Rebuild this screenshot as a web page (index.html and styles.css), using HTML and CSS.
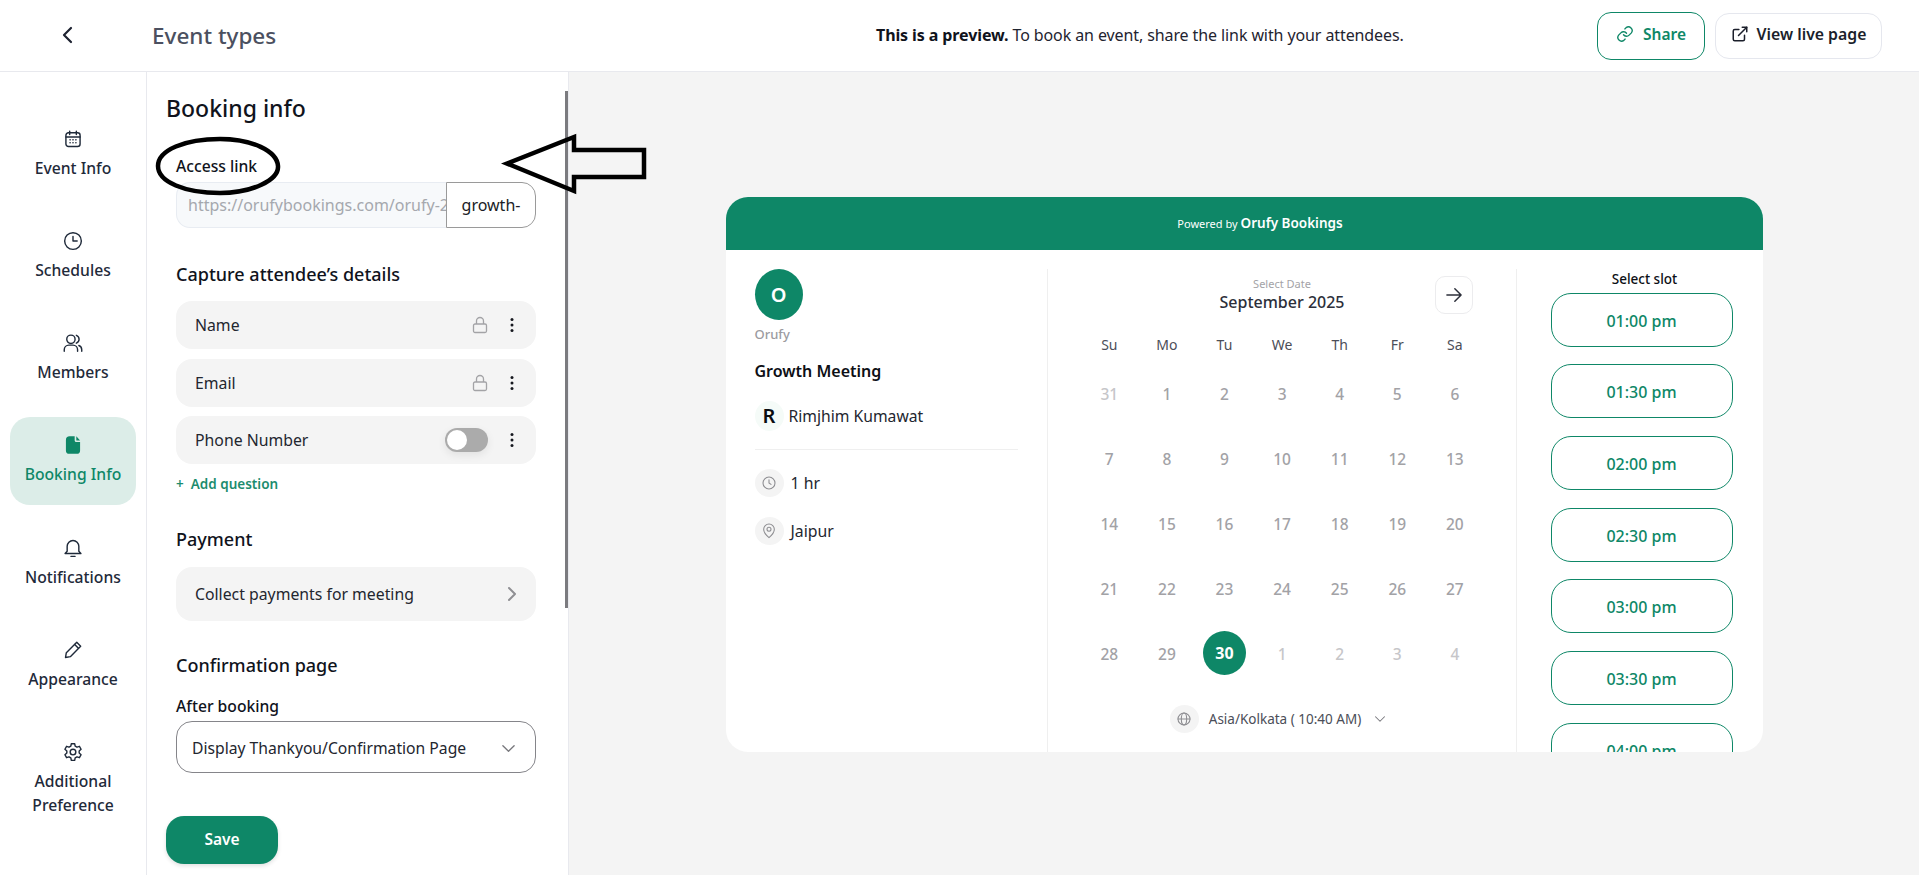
FILE: index.html
```html
<!DOCTYPE html>
<html lang="en">
<head>
<meta charset="utf-8">
<title>Event types</title>
<link rel="stylesheet" href="styles.css">
</head>
<body>
<div class="page">
  <header class="topbar">
    <div class="back"><svg class="ic-back" viewBox="0 0 24 24"><path d="M15 5l-7 7 7 7"/></svg></div>
    <div class="crumb">Event types</div>
    <div class="notice"><b>This is a preview.</b> To book an event, share the link with your attendees.</div>
    <div class="actions">
      <button class="btn btn-share"><svg class="ic" viewBox="0 0 24 24"><path d="M10 13a5 5 0 0 0 7.500.5l3-3a5 5 0 0 0-7-7l-1.700 1.700"/><path d="M14 11a5 5 0 0 0-7.500-.5l-3 3a5 5 0 0 0 7 7l1.700-1.700"/></svg>Share</button>
      <button class="btn btn-live"><svg class="ic" viewBox="0 0 24 24"><path d="M18 13.500V19a2 2 0 0 1-2 2H5a2 2 0 0 1-2-2V8a2 2 0 0 1 2-2h5.500"/><path d="M15 3h6v6"/><path d="M10 14L21 3"/></svg>View live page</button>
    </div>
  </header>
  <div class="main">
    <nav class="sidebar">
      <a class="nav-item"><svg class="nav-ic" viewBox="0 0 24 24"><rect x="3.500" y="4.500" width="17" height="16.500" rx="3"/><path d="M3.500 9.500h17M8 2.500v4M16 2.500v4"/><path class="dots" d="M8.500 13h.01M12 13h.01M15.500 13h.01M8.500 16.500h.01M12 16.500h.01M15.500 16.500h.01"/></svg><span>Event Info</span></a>
      <a class="nav-item"><svg class="nav-ic" viewBox="0 0 24 24"><circle cx="12" cy="12" r="10"/><path d="M12 6.500V12h5"/></svg><span>Schedules</span></a>
      <a class="nav-item"><svg class="nav-ic" viewBox="0 0 24 24"><circle cx="9.500" cy="7.500" r="5"/><path d="M1.500 22v-2A5.500 5.500 0 0 1 7 14.500h5a5.500 5.500 0 0 1 5.500 5.500v2"/><path d="M16 2.800a5 5 0 0 1 0 9.400M19 15a5.500 5.500 0 0 1 3.500 5v2"/></svg><span>Members</span></a>
      <a class="nav-item active"><svg class="nav-ic filled" viewBox="0 0 24 24"><path d="M8 1.500h6v5a2 2 0 0 0 2 2h4.500v10a4 4 0 0 1-4 4h-9a4 4 0 0 1-4-4V6a4.500 4.500 0 0 1 4.500-4.500z"/><path d="M16 1.500L20.500 6.500H16z"/></svg><span>Booking Info</span></a>
      <a class="nav-item"><svg class="nav-ic" viewBox="0 0 24 24"><path d="M5 16V10a7 7 0 0 1 14 0v6l2.500 2.500h-19z"/><path d="M9.500 22h5"/></svg><span>Notifications</span></a>
      <a class="nav-item"><svg class="nav-ic" viewBox="0 0 24 24"><path d="M16.500 2.800l4.700 4.700L8.800 20 3 21l1-5.800z"/><path d="M14 5.500l4.500 4.500"/></svg><span>Appearance</span></a>
      <a class="nav-item"><svg class="nav-ic" viewBox="0 0 24 24"><circle cx="12" cy="12" r="3.400"/><path d="M10 2h4l.6 3 2.200 1.200 2.900-1 2 3.500-2.300 2v2.600l2.300 2-2 3.500-2.900-1-2.200 1.200-.6 3h-4l-.6-3-2.200-1.200-2.900 1-2-3.500 2.300-2v-2.600l-2.300-2 2-3.500 2.900 1L9.400 5z"/></svg><span>Additional Preference</span></a>
    </nav>

    <section class="panel">
      <h1 class="panel-title">Booking info</h1>
      <div class="form">
        <label class="label label-access">Access link</label>
        <div class="link-field">
          <div class="link-prefix">https://orufybookings.com/orufy-2</div>
          <div class="link-slug">growth-</div>
        </div>

        <h2 class="section-title s-capture">Capture attendee’s details</h2>
        <div class="rows">
          <div class="row"><span class="row-text">Name</span><svg class="ic-lock" viewBox="0 0 16 18"><rect x="1.500" y="8" width="13" height="8.500" rx="1.500"/><path d="M4.500 8V5a3.500 3.500 0 0 1 7 0v3"/></svg><svg class="ic-more" viewBox="0 0 16 16"><circle cx="8" cy="2.500" r="1.500"/><circle cx="8" cy="8" r="1.500"/><circle cx="8" cy="13.500" r="1.500"/></svg></div>
          <div class="row"><span class="row-text">Email</span><svg class="ic-lock" viewBox="0 0 16 18"><rect x="1.500" y="8" width="13" height="8.500" rx="1.500"/><path d="M4.500 8V5a3.500 3.500 0 0 1 7 0v3"/></svg><svg class="ic-more" viewBox="0 0 16 16"><circle cx="8" cy="2.500" r="1.500"/><circle cx="8" cy="8" r="1.500"/><circle cx="8" cy="13.500" r="1.500"/></svg></div>
          <div class="row"><span class="row-text">Phone Number</span><span class="toggle"><span class="knob"></span></span><svg class="ic-more" viewBox="0 0 16 16"><circle cx="8" cy="2.500" r="1.500"/><circle cx="8" cy="8" r="1.500"/><circle cx="8" cy="13.500" r="1.500"/></svg></div>
        </div>
        <div class="add-q">+ &nbsp;Add question</div>

        <h2 class="section-title s-payment">Payment</h2>
        <div class="row row-tall"><span class="row-text">Collect payments for meeting</span><svg class="ic-chev" viewBox="0 0 16 16"><path d="M5 2l6 6-6 6"/></svg></div>

        <h2 class="section-title s-confirm">Confirmation page</h2>
        <label class="label label-after">After booking</label>
        <div class="select"><span>Display Thankyou/Confirmation Page</span><svg class="ic-down" viewBox="0 0 16 16"><path d="M2 5l6 6 6-6"/></svg></div>
      </div>
      <button class="save">Save</button>
      <div class="scroll-thumb"></div>
    </section>

    <section class="preview">
      <div class="card">
        <div class="card-head">Powered by <b>Orufy Bookings</b></div>
        <div class="card-body">
          <div class="col-info">
            <div class="avatar">O</div>
            <div class="org">Orufy</div>
            <div class="meeting">Growth Meeting</div>
            <div class="host"><span class="host-badge">R</span><span>Rimjhim Kumawat</span></div>
            <div class="meta meta-time"><span class="meta-ic"><svg viewBox="0 0 24 24"><circle cx="12" cy="12" r="9"/><path d="M12 7v5l3 2"/></svg></span><span>1 hr</span></div>
            <div class="meta"><span class="meta-ic"><svg viewBox="0 0 24 24"><path d="M12 22s8-6.500 8-12.500a8 8 0 0 0-16 0C4 15.500 12 22 12 22z"/><circle cx="12" cy="9.500" r="3"/></svg></span><span>Jaipur</span></div>
          </div>
          <div class="col-cal">
            <div class="cal-head">
              <div class="cal-title"><div class="cal-sub">Select Date</div><div class="cal-month">September 2025</div></div>
              <button class="cal-next"><svg viewBox="0 0 24 24"><path d="M3.500 12h17M13 4.500l7.500 7.500-7.500 7.500"/></svg></button>
            </div>
            <div class="weekdays"><span>Su</span><span>Mo</span><span>Tu</span><span>We</span><span>Th</span><span>Fr</span><span>Sa</span></div>
            <div class="dates">
              <span class="faint">31</span><span>1</span><span>2</span><span>3</span><span>4</span><span>5</span><span>6</span>
              <span>7</span><span>8</span><span>9</span><span>10</span><span>11</span><span>12</span><span>13</span>
              <span>14</span><span>15</span><span>16</span><span>17</span><span>18</span><span>19</span><span>20</span>
              <span>21</span><span>22</span><span>23</span><span>24</span><span>25</span><span>26</span><span>27</span>
              <span>28</span><span>29</span><span class="today"><i>30</i></span><span class="faint">1</span><span class="faint">2</span><span class="faint">3</span><span class="faint">4</span>
            </div>
            <div class="tz">
              <span class="meta-ic"><svg viewBox="0 0 24 24"><circle cx="12" cy="12" r="9"/><ellipse cx="12" cy="12" rx="4" ry="9"/><path d="M3 12h18"/></svg></span>
              <span class="tz-text">Asia/Kolkata ( 10:40 AM)</span>
              <svg class="ic-down tz-down" viewBox="0 0 16 16"><path d="M2 5l6 6 6-6"/></svg>
            </div>
          </div>
          <div class="col-slots">
            <div class="slot-title">Select slot</div>
            <div class="slots">
              <div class="slot">01:00 pm</div>
              <div class="slot">01:30 pm</div>
              <div class="slot">02:00 pm</div>
              <div class="slot">02:30 pm</div>
              <div class="slot">03:00 pm</div>
              <div class="slot">03:30 pm</div>
              <div class="slot">04:00 pm</div>
            </div>
          </div>
        </div>
      </div>
    </section>
  </div>
  <svg class="annot" viewBox="0 0 1919 875">
    <path d="M220 139c32 0 57 12 58 27 1 14-26 27-58 27-35 0-62-11-62-27 0-16 27-27 62-27z"/>
    <path d="M644 150H574V137L507 163.500 574 191V177H644z"/>
  </svg>
</div>
</body>
</html>
```
FILE: styles.css
```css
* { box-sizing: border-box; }
html, body { margin: 0; height: 100%; }
body { font-family: "Noto Sans", "Open Sans", sans-serif; color: #1f2430; background: #fff; overflow: hidden; }
.page { position: relative; width: 100%; height: 875px; display: flex; flex-direction: column; overflow: hidden; }

/* top bar */
.topbar { height: 72px; flex: none; display: flex; align-items: center; border-bottom: 1px solid #e8e9ee; background: #fff; }
.back { width: 152px; flex: none; display: flex; padding-left: 56px; }
.ic-back { width: 24px; height: 24px; fill: none; stroke: #1d2230; stroke-width: 2.200; stroke-linecap: round; stroke-linejoin: round; margin-top: -2px; }
.crumb { width: 724px; flex: none; font-size: 22.500px; font-weight: 500; color: #4b5060; margin-top: -1px; }
.notice { flex: 1; font-size: 16px; color: #1f2430; white-space: nowrap; margin-top: -2px; letter-spacing: -.1px; }
.notice b { font-weight: 700; color: #10131c; }
.actions { display: flex; align-items: center; gap: 10px; margin-right: 37px; }
.btn { display: flex; align-items: center; justify-content: center; gap: 9px; font: 600 15.500px "Noto Sans", sans-serif; background: #fff; border-radius: 14px; padding: 0 0 3px; }
.btn-share { width: 108px; height: 48px; border: 1px solid #0e8767; color: #0e8767; }
.btn-live { width: 167px; height: 46px; border: 1px solid #e5e7ee; color: #1b1f2b; font-size: 15.800px; gap: 8px; }
.ic { width: 18px; height: 18px; fill: none; stroke: currentColor; stroke-width: 2; stroke-linecap: round; stroke-linejoin: round; }
.btn-share .ic { stroke-width: 1.800; }

.main { flex: 1; min-height: 0; display: flex; }

/* sidebar */
.sidebar { width: 147px; flex: none; border-right: 1px solid #e8e9ee; padding: 39px 10px 0; display: flex; flex-direction: column; gap: 14.150px; }
.nav-item { height: 88px; border-radius: 20px; display: flex; flex-direction: column; align-items: center; padding-top: 18px; gap: 7px; color: #1f2a3a; font-size: 15.700px; font-weight: 500; line-height: 24px; text-align: center; }
.nav-item span { display: block; padding: 0 6px; }
.nav-ic { width: 20px; height: 20px; flex: none; fill: none; stroke: #1f2a3a; stroke-width: 1.700; stroke-linecap: round; stroke-linejoin: round; }
.nav-ic .dots { stroke-width: 2; }
.nav-item.active { background: #dcede8; color: #0e8767; }
.nav-ic.filled { fill: #0e8767; stroke: none; }

/* panel */
.panel { position: relative; width: 422px; flex: none; border-right: 1px solid #e8e9ee; padding: 21px 0 0 19px; }
.panel-title { margin: 0; font-size: 23px; line-height: 30px; font-weight: 500; color: #10131c; }
.form { margin-left: 10px; width: 360px; }
.label { display: block; font-size: 15.700px; line-height: 20px; font-weight: 500; color: #10131c; }
.label-access { margin-top: 33px; }
.label-after { margin-top: 19px; }
.link-field { margin-top: 6px; height: 46px; display: flex; }
.link-prefix { width: 270px; flex: none; padding-left: 11px; font-size: 16px; line-height: 44px; color: #a5a8ae; white-space: nowrap; overflow: hidden; background: #f7f9fb; border: 1px solid #e8ecf2; border-right: 0; border-radius: 14px 0 0 14px; }
.link-slug { flex: 1; background: #fff; border: 1px solid #9a9a9a; border-radius: 0 14px 14px 0; font-size: 16px; line-height: 44px; text-align: center; color: #1a1d26; }
.section-title { margin: 0; font-size: 18px; line-height: 24px; font-weight: 500; color: #10131c; }
.s-capture { margin-top: 34px; }
.s-payment { margin-top: 34px; }
.s-confirm { margin-top: 32px; }
.rows { margin-top: 15px; display: flex; flex-direction: column; gap: 9.500px; }
.row { height: 48px; border-radius: 16px; background: #f4f4f4; display: flex; align-items: center; gap: 16px; padding: 0 16px 0 19px; }
.row-tall { height: 54px; margin-top: 16px; }
.row-text { flex: 1; font-size: 15.800px; color: #23262f; }
.ic-lock { width: 16px; height: 18px; fill: none; stroke: #a3a3a6; stroke-width: 1.300; }
.ic-more { width: 16px; height: 16px; fill: #16181f; }
.toggle { width: 43px; height: 24px; border-radius: 12px; background: #ababab; padding: 2px; display: flex; box-shadow: 0 3px 8px rgba(0, 0, 0, .08); }
.knob { width: 20px; height: 20px; border-radius: 50%; background: #fff; }
.ic-chev { width: 16px; height: 18px; fill: none; stroke: #8f8f93; stroke-width: 2; stroke-linecap: round; stroke-linejoin: round; }
.add-q { margin-top: 11px; font-size: 13.500px; line-height: 18px; font-weight: 600; color: #1c8c6e; }
.select { margin-top: 5px; height: 52px; border: 1px solid #85858a; border-radius: 16px; background: #fff; display: flex; align-items: center; justify-content: space-between; padding: 2px 19px 0 15px; font-size: 15.700px; color: #23262f; }
.ic-down { width: 15px; height: 15px; fill: none; stroke: #77777c; stroke-width: 1.400; stroke-linecap: round; stroke-linejoin: round; }
.save { margin-top: 43px; width: 112px; height: 48px; border: 0; border-radius: 18px; background: #0e8767; color: #fff; font: 600 15.500px "Noto Sans", sans-serif; box-shadow: 0 2px 4px rgba(0, 0, 0, .12); display: block; padding: 0 0 2px; }
.scroll-thumb { position: absolute; right: 0; top: 19px; width: 3px; height: 517px; background: #7b7b7f; }

/* preview */
.preview { flex: 1; min-width: 0; background: #f4f4f4; display: flex; align-items: center; justify-content: center; padding-top: 1px; }
.card { width: 1037px; height: 555px; border-radius: 22px; background: #fff; overflow: hidden; display: flex; flex-direction: column; }
.card-head { height: 53px; flex: none; background: #0e8767; color: #fff; display: flex; align-items: center; justify-content: center; gap: 3px; font-size: 11px; padding-left: 32px; }
.card-head b { font-size: 13.500px; font-weight: 600; }
.card-body { flex: 1; min-height: 0; display: flex; }

.col-info { width: 322px; flex: none; border-right: 1px solid #efefef; padding: 0 29px; margin-top: 19px; }
.avatar { width: 48px; height: 51px; border-radius: 50%; background: #0e8767; color: #fff; display: flex; align-items: center; justify-content: center; font-size: 20px; font-weight: 600; }
.org { margin-top: 5px; font-size: 13px; line-height: 18px; color: #9b9b9f; font-weight: 500; }
.meeting { margin-top: 17px; font-size: 16px; line-height: 22px; font-weight: 600; color: #0d0f15; }
.host { margin-top: 19px; display: flex; align-items: center; gap: 5px; font-size: 15.700px; color: #23262f; padding-bottom: 18px; border-bottom: 1px solid #efefef; }
.host-badge { width: 29px; height: 30px; border-radius: 50%; background: #f5fbf8; color: #0b0d12; font-size: 20px; font-weight: 600; display: flex; align-items: center; justify-content: center; }
.meta { margin-top: 20px; display: flex; align-items: center; gap: 7px; font-size: 15.800px; color: #23262f; }
.meta-time { margin-top: 19px; }
.meta-ic { width: 29px; height: 28px; flex: none; border-radius: 50%; background: #f4f4f4; display: flex; align-items: center; justify-content: center; }
.meta-ic svg { width: 16px; height: 16px; fill: none; stroke: #8d8d91; stroke-width: 1.600; stroke-linecap: round; stroke-linejoin: round; }

.col-cal { width: 469px; flex: none; border-right: 1px solid #efefef; padding: 7px 32px 0 33px; margin-top: 19px; }
.cal-head { display: grid; grid-template-columns: 1fr auto 1fr; padding: 0 11px; height: 38px; }
.cal-title { grid-column: 2; text-align: center; }
.cal-sub { font-size: 11px; line-height: 14px; color: #a3a3a7; margin-top: 1px; }
.cal-month { font-size: 16px; line-height: 24px; font-weight: 500; color: #2c2f3a; margin-top: -1px; }
.cal-next { grid-column: 3; justify-self: end; width: 38px; height: 38px; border: 1px solid #ececee; border-radius: 10px; background: #fff; padding: 0; display: flex; align-items: center; justify-content: center; }
.cal-next svg { width: 20px; height: 20px; fill: none; stroke: #2c2f3a; stroke-width: 1.800; stroke-linecap: round; stroke-linejoin: round; }
.weekdays, .dates { display: grid; grid-template-columns: repeat(7, 57.600px); text-align: center; }
.weekdays { margin-top: 21px; font-size: 14px; line-height: 20px; color: #4b4e58; }
.dates { margin-top: 6px; grid-auto-rows: 65px; font-size: 15.500px; font-weight: 500; color: #a2a2a6; }
.dates span { display: flex; align-items: center; justify-content: center; padding-top: 1px; }
.dates .today { padding-top: 0; }
.dates .faint { color: #c6c6c9; }
.today i { width: 43px; height: 44px; border-radius: 50%; background: #0e8767; color: #fff; font-style: normal; font-weight: 700; font-size: 16px; display: flex; align-items: center; justify-content: center; }
.tz { margin-top: 19px; display: flex; align-items: center; justify-content: center; gap: 10px; font-size: 13.500px; color: #4b4e58; padding-right: 8px; }
.tz-down { width: 12px; height: 12px; margin-left: 3px; }

.col-slots { flex: 1; padding: 20px 0 0 34px; }
.slot-title { width: 182px; padding-left: 6px; text-align: center; font-size: 13.500px; line-height: 18px; font-weight: 500; color: #0d0f15; }
.slots { margin-top: 5px; display: flex; flex-direction: column; gap: 17.700px; }
.slot { width: 182px; height: 54px; flex: none; border: 1px solid #0e8767; border-radius: 20px; padding-top: 2px; display: flex; align-items: center; justify-content: center; font-size: 16px; font-weight: 500; color: #0e8767; }

/* hand-drawn markup over the screenshot */
.annot { position: absolute; inset: 0; width: 1919px; height: 875px; pointer-events: none; fill: none; stroke: #000; stroke-width: 4.500; }
```
